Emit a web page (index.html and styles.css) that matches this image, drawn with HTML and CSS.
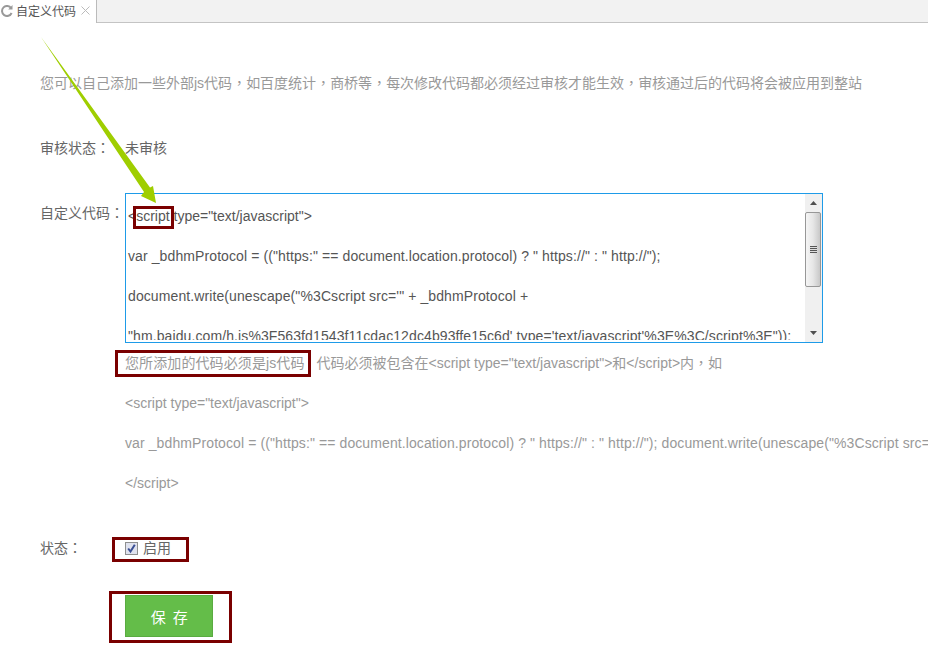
FILE: index.html
```html
<!DOCTYPE html>
<html lang="zh-CN">
<head>
<meta charset="utf-8">
<title>自定义代码</title>
<link rel="stylesheet" href="styles.css">
</head>
<body>
<div class="tabs">
  <div class="tab">
    <svg class="refresh" width="12" height="12" viewBox="0 0 12 12"><path d="M10.2 3.2A5 5 0 1 0 10.6 8" fill="none" stroke="#999" stroke-width="2"/><path d="M7.2 4.4h4.3V0z" fill="#999"/></svg>
    <span class="tab-title">自定义代码</span>
    <svg class="close" width="9" height="9" viewBox="0 0 9 9"><path d="M.5.5l8 8M8.5.5l-8 8" stroke="#bbb" stroke-width="1" fill="none"/></svg>
  </div>
  <div class="tab-rest"></div>
</div>
<main class="page">
  <p class="intro">您可以自己添加一些外部js代码<span class="cp">，</span>如百度统计<span class="cp">，</span>商桥等<span class="cp">，</span>每次修改代码都必须经过审核才能生效<span class="cp">，</span>审核通过后的代码将会被应用到整站</p>
  <div class="row status-row">
    <div class="label">审核状态<span class="cp">：</span></div>
    <div class="value">未审核</div>
  </div>
  <div class="row code-row">
    <div class="label">自定义代码<span class="cp">：</span></div>
    <div class="field">
      <div class="code-box">
        <div class="code-text">
          <p class="plain">&lt;script type="text/javascript"&gt;</p>
          <p>var _bdhmProtocol = (("https:" == document.location.protocol) ? " https://" : " http://");</p>
          <p>document.write(unescape("%3Cscript src='" + _bdhmProtocol +</p>
          <p>"hm.baidu.com/h.js%3F563fd1543f11cdac12dc4b93ffe15c6d' type='text/javascript'%3E%3C/script%3E"));</p>
        </div>
        <div class="scrollbar">
          <svg class="arrow-btn" width="17" height="17" viewBox="0 0 17 17"><path d="M5 11h7L8.500 7z" fill="#505050"/></svg>
          <div class="track">
            <div class="thumb"><span class="grip"></span></div>
          </div>
          <svg class="arrow-btn" width="17" height="17" viewBox="0 0 17 17"><path d="M5 6h7l-3.500 4z" fill="#505050"/></svg>
        </div>
      </div>
      <div class="hints">
        <p>您所添加的代码必须是js代码<span class="hint-rest">代码必须被包含在&lt;script type="text/javascript"&gt;和&lt;/script&gt;内<span class="cp">，</span>如</span></p>
        <p class="plain">&lt;script type="text/javascript"&gt;</p>
        <p>var _bdhmProtocol = (("https:" == document.location.protocol) ? " https://" : " http://"); document.write(unescape("%3Cscript src='" + _bdhmProtocol + "hm.baidu.com/h.js%3F563fd1543f11cdac12dc4b93ffe15c6d' type='text/javascript'%3E%3C/script%3E"));</p>
        <p class="plain">&lt;/script&gt;</p>
      </div>
    </div>
  </div>
  <div class="row state-row">
    <div class="label">状态<span class="cp">：</span></div>
    <label class="value check">
      <svg class="checkbox" width="13" height="13" viewBox="0 0 13 13"><rect x=".5" y=".5" width="12" height="12" fill="#dfe2ee" stroke="#8e8f8f"/><path d="M3.200 6.500l2.300 3L9.800 2.800" fill="none" stroke="#3a4f94" stroke-width="2"/></svg>
      启用
    </label>
  </div>
  <div class="actions"><button class="save" type="button">保 存</button></div>
</main>
<svg class="pointer" width="120" height="172" viewBox="0 0 120 172"><path d="M1 2L110 152.500 113 151 116 168 101 161 104 157z" fill="#9fce00"/></svg>
<div class="mark mark-script"></div>
<div class="mark mark-hint"></div>
<div class="mark mark-check"></div>
<div class="mark mark-save"></div>
</body>
</html>
```
FILE: styles.css
```css
* { box-sizing: border-box; }
html, body { margin: 0; height: 664px; overflow: hidden; background: #fff; }
body {
  position: relative;
  font-family: "Liberation Sans", "Noto Sans CJK SC", sans-serif;
  font-size: 14px;
  color: #666;
}
p { margin: 0; }
.cp {
  font-family: "Noto Sans CJK TC", sans-serif;
  font-feature-settings: "locl" 0;
  line-height: 0;
}
.plain { letter-spacing: 0; }

.tabs { display: flex; height: 23px; }
.tab {
  width: 97px;
  display: flex;
  align-items: center;
  padding-left: 1px;
  padding-bottom: 2px;
  background: #fff;
  border-right: 1px solid #bbb;
}
.tab-title { margin-left: 3px; font-size: 12px; color: #555; }
.close { margin-left: 5px; }
.tab-rest { flex: 1; background: #f2f2f2; border-bottom: 1px solid #c4c4c4; }

.page { padding-left: 40px; }
.intro { margin-top: 50px; line-height: 20px; color: #999; white-space: nowrap; }
.row { display: flex; }
.label { width: 85px; flex: none; }
.status-row { margin-top: 45px; line-height: 20px; }
.value { color: #666; }
.code-row { margin-top: 35px; }
.code-row .label { margin-top: 10px; line-height: 20px; }
.field { min-width: 0; }

.code-box {
  width: 698px;
  height: 150px;
  display: flex;
  border: 1px solid #1e9be8;
  overflow: hidden;
}
.code-text {
  flex: 1;
  min-width: 0;
  height: 146px;
  padding: 2px 0 0 2px;
  color: #555;
  line-height: 40px;
  letter-spacing: .1px;
  white-space: nowrap;
  overflow: hidden;
}
.code-text .plain { letter-spacing: 0; }
.scrollbar {
  width: 17px;
  flex: none;
  display: flex;
  flex-direction: column;
  background: #f0f0f0;
}
.arrow-btn { flex: none; display: block; }
.track { flex: 1; }
.thumb {
  height: 75px;
  margin: 1px 1px 0 0;
  display: flex;
  align-items: center;
  justify-content: center;
  border: 1px solid #979797;
  border-radius: 2px;
  background: linear-gradient(to right, #f5f5f5, #e6e6e6 50%, #c8c8c8);
}
.grip {
  width: 7px;
  height: 7px;
  background: repeating-linear-gradient(to bottom, #555 0 1px, #ddd 1px 2px);
}

.hints { width: 803px; color: #999; line-height: 40px; letter-spacing: .1px; white-space: nowrap; }
.hints .plain { letter-spacing: 0; }
.hint-rest { margin-left: 12px; letter-spacing: 0; }

.state-row { margin-top: 35px; line-height: 20px; }
.check { display: flex; align-items: center; gap: 5px; cursor: pointer; }
.checkbox { flex: none; }

.actions { margin-top: 37px; padding-left: 85px; }
.save {
  display: block;
  width: 88px;
  height: 42px;
  padding: 0 0 0 2px;
  border: 1px solid #5aab41;
  background: #64bd49;
  color: #fff;
  font: 15px "Liberation Sans", "Noto Sans CJK SC", sans-serif;
  letter-spacing: 1.5px;
}

.pointer { position: absolute; left: 40px; top: 35px; }
.mark { position: absolute; border: 3px solid #7a0000; }
.mark-script { left: 133px; top: 206px; width: 41px; height: 23px; }
.mark-hint { left: 115px; top: 350px; width: 196px; height: 27px; }
.mark-check { left: 112px; top: 537px; width: 77px; height: 25px; }
.mark-save { left: 109px; top: 591px; width: 123px; height: 52px; }
```
